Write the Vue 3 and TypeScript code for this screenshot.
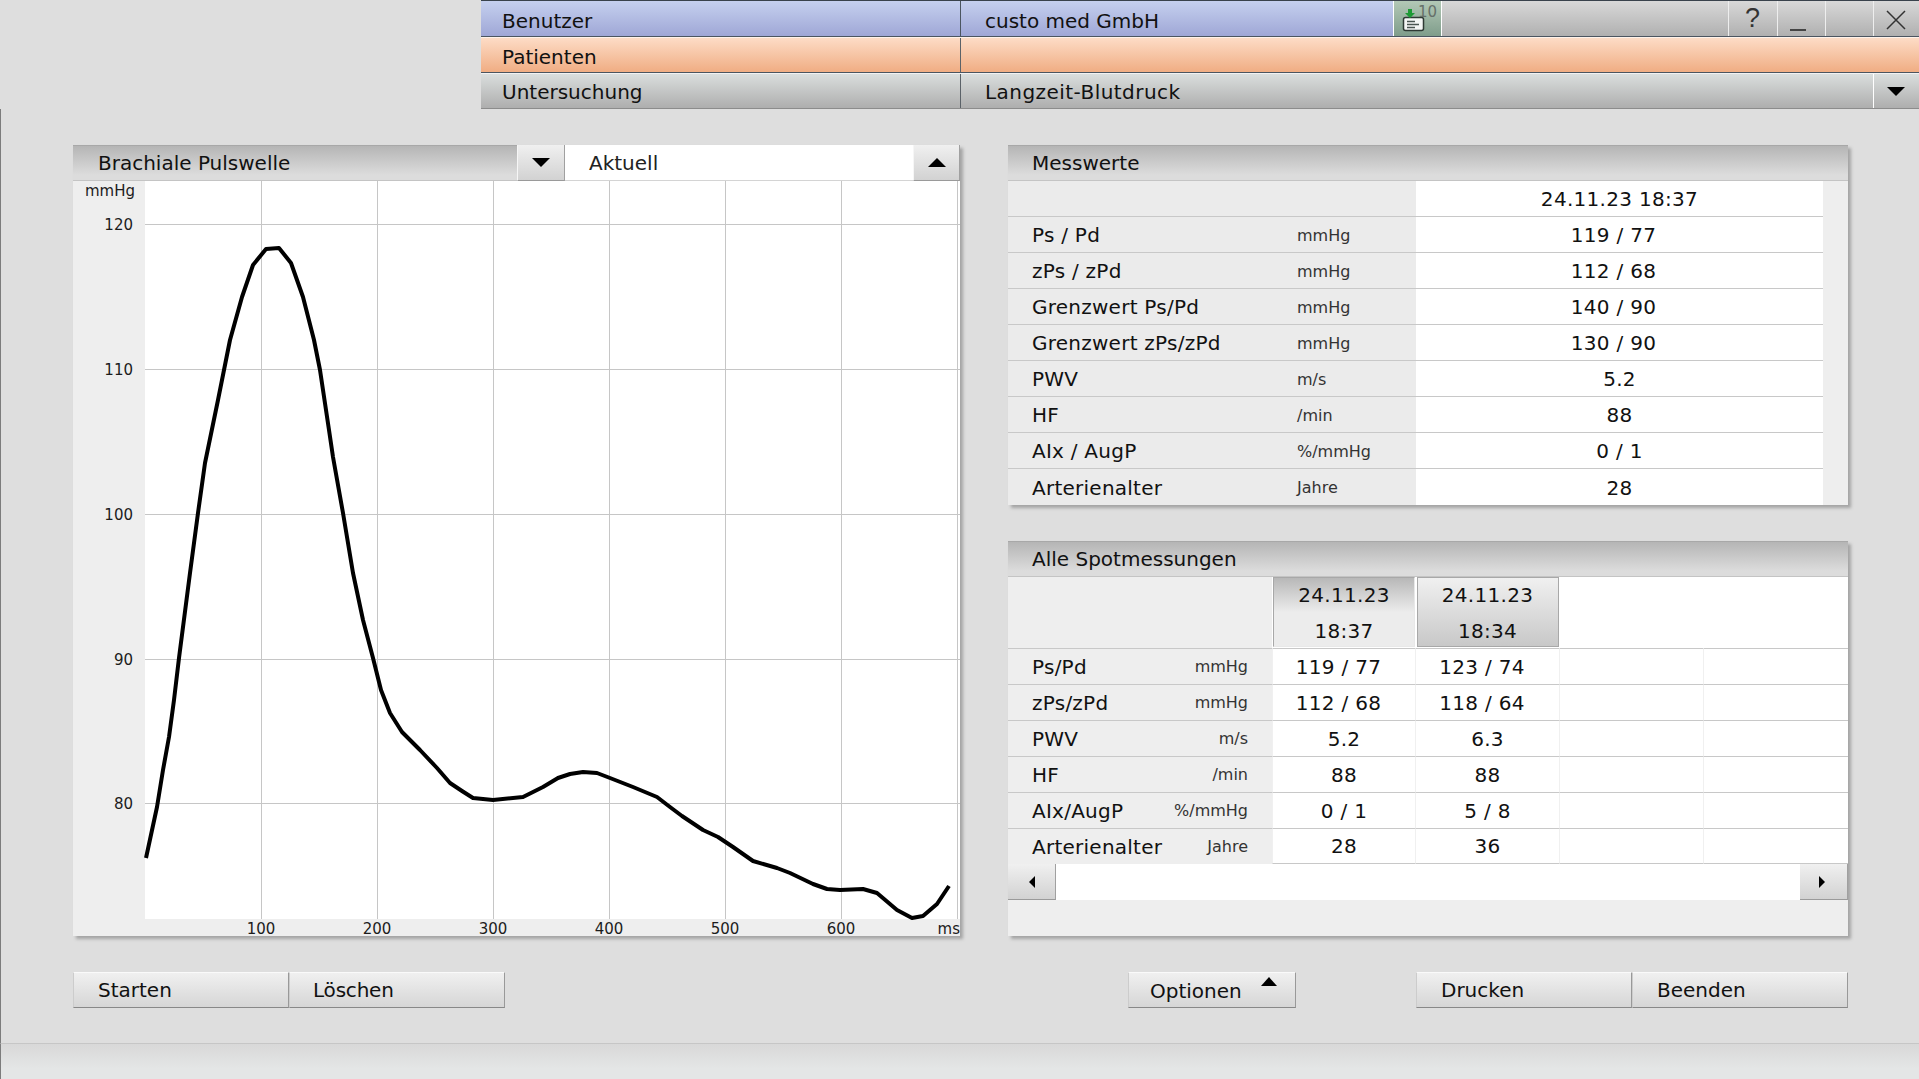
<script setup lang="ts">
const curve: [number, number][] = [
  [146, 858], [157, 807], [163, 770], [169, 737], [174, 700], [179, 658], [190, 573], [198, 513], [205, 463],
  [218, 400], [230, 340], [242, 297], [253, 265], [266, 249], [279, 248], [291, 263], [303, 297],
  [314, 340], [320, 370], [329, 430], [333, 457], [343, 513], [353, 573], [363, 620], [373, 658], [381, 690],
  [390, 713], [402, 732], [420, 750], [437, 768], [450, 783], [462, 791], [473, 798], [493, 800], [523, 797], [543, 787],
  [558, 778], [570, 774], [583, 772], [597, 773], [610, 778], [633, 787], [657, 797], [670, 807], [682, 816],
  [703, 830], [718, 837], [733, 847], [753, 861], [777, 868], [790, 873], [813, 884], [827, 889], [840, 890],
  [863, 889], [877, 893], [897, 910], [912, 918], [923, 916], [937, 904], [949, 886],
];
const curvePoints = curve.map((p) => p.join(',')).join(' ');

const xTicks = [
  { x: 261, label: '100' },
  { x: 377, label: '200' },
  { x: 493, label: '300' },
  { x: 609, label: '400' },
  { x: 725, label: '500' },
  { x: 841, label: '600' },
];
const yTicks = [
  { y: 224, label: '120' },
  { y: 369, label: '110' },
  { y: 514, label: '100' },
  { y: 659, label: '90' },
  { y: 803, label: '80' },
];

const messwerte = [
  { label: 'Ps / Pd', unit: 'mmHg', value: '119 / 77' },
  { label: 'zPs / zPd', unit: 'mmHg', value: '112 / 68' },
  { label: 'Grenzwert Ps/Pd', unit: 'mmHg', value: '140 / 90' },
  { label: 'Grenzwert zPs/zPd', unit: 'mmHg', value: '130 / 90' },
  { label: 'PWV', unit: 'm/s', value: '5.2' },
  { label: 'HF', unit: '/min', value: '88' },
  { label: 'AIx / AugP', unit: '%/mmHg', value: '0 / 1' },
  { label: 'Arterienalter', unit: 'Jahre', value: '28' },
];

const spots = [
  { label: 'Ps/Pd', unit: 'mmHg', a: '119 / 77', b: '123 / 74' },
  { label: 'zPs/zPd', unit: 'mmHg', a: '112 / 68', b: '118 / 64' },
  { label: 'PWV', unit: 'm/s', a: '5.2', b: '6.3' },
  { label: 'HF', unit: '/min', a: '88', b: '88' },
  { label: 'AIx/AugP', unit: '%/mmHg', a: '0 / 1', b: '5 / 8' },
  { label: 'Arterienalter', unit: 'Jahre', a: '28', b: '36' },
];

// the long pairs sit a few px left of the column centre in the original
const isPair = (v: string) => v.length >= 8;
</script>

<template>
  <div class="app">
    <header class="topbar">
      <div class="toprow blue">
        <div class="cell name">Benutzer</div>
        <div class="cell val">custo med GmbH</div>
        <div class="cell notify">
          <svg width="24" height="24" viewBox="0 0 24 24">
            <rect x="2.5" y="9.5" width="20" height="13" rx="2" fill="#f4f6f4" stroke="#2f3a34" stroke-width="1.5" />
            <path d="M6 13.5h8M6 16.5h12M6 19.5h8" stroke="#4a5550" stroke-width="1.5" />
            <path d="M7 1h4v4h3l-5 5-5-5h3z" fill="#1d9a35" />
          </svg>
          <span class="count">10</span>
        </div>
        <div class="cell filler"></div>
        <div class="cell win help">?</div>
        <div class="cell win">
          <span class="minimize"></span>
        </div>
        <div class="cell win"></div>
        <div class="cell win close">
          <svg width="20" height="20" viewBox="0 0 20 20">
            <path d="M1 1l18 18M19 1L1 19" stroke="#333" stroke-width="1.5" fill="none" />
          </svg>
        </div>
      </div>
      <div class="toprow orange">
        <div class="cell name">Patienten</div>
        <div class="cell grow"></div>
      </div>
      <div class="toprow gray">
        <div class="cell name">Untersuchung</div>
        <div class="cell grow val exam">Langzeit-Blutdruck</div>
        <div class="cell drop"><i class="tri down"></i></div>
      </div>
    </header>

    <main class="content">
      <div class="panels">
        <section class="panel chart-panel">
          <div class="chart-head">
            <div class="chart-title">Brachiale Pulswelle</div>
            <button class="arrow-btn"><i class="tri down"></i></button>
            <div class="chart-select">Aktuell</div>
            <button class="arrow-btn up-btn"><i class="tri up"></i></button>
          </div>
          <svg class="chart" width="887" height="755" viewBox="73 181 887 755">
            <rect x="145" y="181" width="815" height="738" fill="#fff" />
            <line v-for="t in xTicks" :key="t.label" :x1="t.x + 0.5" :x2="t.x + 0.5" y1="181" y2="919" class="grid" />
            <line x1="957.5" x2="957.5" y1="181" y2="919" class="grid" />
            <line v-for="t in yTicks" :key="t.label" x1="145" x2="960" :y1="t.y + 0.5" :y2="t.y + 0.5" class="grid" />
            <polyline :points="curvePoints" class="curve" />
            <text x="135" y="196" text-anchor="end" class="axis">mmHg</text>
            <text v-for="t in yTicks" :key="t.label" x="133" :y="t.y + 6" text-anchor="end" class="axis">{{ t.label }}</text>
            <text v-for="t in xTicks" :key="t.label" :x="t.x" y="934" text-anchor="middle" class="axis">{{ t.label }}</text>
            <text x="960" y="934" text-anchor="end" class="axis">ms</text>
          </svg>
        </section>

        <div class="side">
          <section class="panel">
            <div class="panel-head">Messwerte</div>
            <div class="m-row">
              <div class="m-label"></div>
              <div class="m-unit"></div>
              <div class="m-value">24.11.23 18:37</div>
            </div>
            <div v-for="row in messwerte" :key="row.label" class="m-row">
              <div class="m-label">{{ row.label }}</div>
              <div class="m-unit">{{ row.unit }}</div>
              <div class="m-value" :class="{ pair: isPair(row.value) }">{{ row.value }}</div>
            </div>
          </section>

          <section class="panel spot-panel">
            <div class="panel-head">Alle Spotmessungen</div>
            <div class="s-row s-dates">
              <div class="s-label"></div>
              <div class="s-col"><div class="date active">24.11.23<br />18:37</div></div>
              <div class="s-col"><div class="date">24.11.23<br />18:34</div></div>
              <div class="s-col"></div>
              <div class="s-col"></div>
            </div>
            <div v-for="row in spots" :key="row.label" class="s-row">
              <div class="s-label">
                <span>{{ row.label }}</span>
                <span class="s-unit">{{ row.unit }}</span>
              </div>
              <div class="s-col" :class="{ pair: isPair(row.a) }">{{ row.a }}</div>
              <div class="s-col" :class="{ pair: isPair(row.b) }">{{ row.b }}</div>
              <div class="s-col"></div>
              <div class="s-col"></div>
            </div>
            <div class="scroller">
              <button class="scroll-btn"><i class="tri left"></i></button>
              <button class="scroll-btn"><i class="tri right"></i></button>
            </div>
          </section>
        </div>
      </div>

      <div class="actions">
        <div class="btn-group">
          <button class="btn w-216">Starten</button>
          <button class="btn w-216 delete">Löschen</button>
        </div>
        <button class="btn options">
          <span>Optionen</span>
          <i class="tri up small"></i>
        </button>
        <div class="btn-group print-group">
          <button class="btn w-216">Drucken</button>
          <button class="btn w-216">Beenden</button>
        </div>
      </div>
    </main>

    <footer class="footer"></footer>
  </div>
</template>

<style>
html,
body {
  margin: 0;
  background: #dedede;
}
</style>

<style scoped>
.app {
  width: 1919px;
  height: 1079px;
  display: flex;
  flex-direction: column;
  overflow: hidden;
  background: #dedede;
  color: #111;
  font-family: "DejaVu Sans", Verdana, sans-serif;
  font-size: 20px;
}

/* top bar */
.topbar {
  margin-left: 481px;
  height: 109px;
  flex: none;
  border-top: 1px solid #39424c;
  box-sizing: border-box;
}
.toprow {
  display: flex;
  height: 36px;
  box-sizing: border-box;
  border-bottom: 1px solid #4b5560;
}
.toprow.gray { border-bottom-color: #8c8c8c; }
.blue { background: linear-gradient(#c5d0ef, #9fa7d6); }
.orange {
  background: linear-gradient(#fddcc6, #f0ad83);
  border-top: 1px solid #fff3ea;
}
.gray {
  background: linear-gradient(#dadedd, #aeaeae);
  border-top: 1px solid #f2f2f2;
}
.cell {
  display: flex;
  align-items: center;
  box-sizing: border-box;
  border-left: 1px solid #fff;
}
.name {
  width: 480px;
  padding: 3px 0 0 21px;
  border-left: 0;
  border-right: 1px solid #4b5560;
}
.blue .name,
.blue .val { padding-top: 5px; }
.gray .name { padding-top: 1px; }
.orange .name,
.gray .name { border-right-color: #5b6268; }
.val {
  width: 432px;
  padding: 3px 0 0 24px;
  border-left: 0;
}
.gray .exam {
  padding-top: 1px;
  letter-spacing: 0.45px;
}
.grow { flex: 1; border-left: 0; }
.notify {
  position: relative;
  width: 49px;
  background: linear-gradient(#b3c8b6, #7f9d8b);
  border-right: 1px solid #fff;
  padding: 3px 0 0 7px;
}
.count {
  position: absolute;
  left: 24px;
  top: 2px;
  font-size: 15px;
  color: #66706a;
}
.filler {
  flex: 1;
  border-left: 0;
  background: linear-gradient(#d8d8d8, #b0b0b0);
}
.win {
  width: 48px;
  justify-content: center;
  background: linear-gradient(#d8d8d8, #b0b0b0);
  border-left: 1px solid #eee;
}
.help {
  width: 49px;
  padding-right: 1px;
  font-family: "Liberation Sans", Arial, sans-serif;
  font-size: 27px;
  color: #333;
}
.close {
  width: 46px;
  padding: 3px 2px 0 0;
}
.minimize {
  display: block;
  width: 16px;
  height: 2px;
  margin: 22px 8px 0 0;
  background: #444;
}
.drop {
  width: 46px;
  justify-content: center;
  border-left: 1px solid #fff;
  padding-right: 2px;
}

/* arrows */
.tri {
  display: block;
  width: 0;
  height: 0;
  border-left: 9px solid transparent;
  border-right: 9px solid transparent;
}
.tri.down { border-top: 9px solid #000; }
.tri.up { border-bottom: 9px solid #000; }
.tri.small {
  border-left-width: 8px;
  border-right-width: 8px;
}
.tri.left,
.tri.right {
  border-top: 6px solid transparent;
  border-bottom: 6px solid transparent;
  border-left-width: 0;
  border-right-width: 0;
}
.tri.left { border-right: 6px solid #000; }
.tri.right { border-left: 6px solid #000; }

/* main area */
.content {
  flex: 1;
  border-left: 1px solid #7c7c7c;
  padding: 36px 0 0 72px;
  box-sizing: border-box;
}
.panels {
  display: flex;
  gap: 48px;
  height: 791px;
}
.panel {
  background: #eee;
  box-shadow: 3px 3px 3px #a4a4a4;
}
.chart-panel { width: 887px; height: 791px; }
.side {
  width: 840px;
  display: flex;
  flex-direction: column;
  gap: 36px;
}
.panel-head {
  height: 36px;
  box-sizing: border-box;
  padding: 0 0 1px 24px;
  display: flex;
  align-items: center;
  background: linear-gradient(#b5b5b5, #dcdcdc 85%);
  border-top: 1px solid #a8a8a8;
  border-bottom: 1px solid #c4c4c4;
}

/* chart */
.chart-head {
  display: flex;
  height: 36px;
}
.chart-title {
  width: 444px;
  box-sizing: border-box;
  padding: 0 0 1px 25px;
  display: flex;
  align-items: center;
  background: linear-gradient(#b5b5b5, #dcdcdc 85%);
  border-top: 1px solid #a8a8a8;
  border-bottom: 1px solid #c4c4c4;
}
.arrow-btn {
  width: 48px;
  padding: 0;
  display: flex;
  align-items: center;
  justify-content: center;
  background: linear-gradient(#f0f0f0, #d2d2d2);
  border: 0;
  border-left: 1px solid #f6f6f6;
  border-right: 1px solid #a0a0a0;
  border-bottom: 1px solid #9a9a9a;
}
.chart-select {
  flex: 1;
  background: #fff;
  padding-left: 24px;
  display: flex;
  align-items: center;
  color: #222;
  border-bottom: 1px solid #d4d4d4;
}
.up-btn { width: 47px; }
.chart {
  display: block;
  overflow: visible;
}
.grid {
  stroke: #c6c6c6;
  stroke-width: 1;
}
.curve {
  fill: none;
  stroke: #000;
  stroke-width: 4;
  stroke-linejoin: round;
}
.axis {
  font-family: "DejaVu Sans", Verdana, sans-serif;
  font-size: 15px;
  fill: #1c1c1c;
}

/* Messwerte table */
.m-row {
  display: grid;
  grid-template-columns: 289px 119px 407px 25px;
  height: 36px;
}
.m-label,
.m-unit {
  display: flex;
  align-items: center;
  padding-top: 1px;
  background: #ebebeb;
  border-bottom: 1px solid #c8c8c8;
  box-sizing: border-box;
}
.m-label {
  padding-left: 24px;
  letter-spacing: 0.25px;
}
.m-unit { font-size: 16px; color: #333; }
.m-value {
  background: #fff;
  display: flex;
  align-items: center;
  justify-content: center;
  padding-top: 1px;
  letter-spacing: 0.3px;
  border-bottom: 1px solid #c8c8c8;
  box-sizing: border-box;
}
.m-row:last-child > div { border-bottom: 0; }
.m-value.pair { padding-right: 12px; }

/* Spot table */
.spot-panel { flex: 1; position: relative; }
.s-row {
  display: grid;
  grid-template-columns: 264px 143px 144px 144px 145px;
  height: 36px;
}
.s-dates { height: 72px; }
.s-row:nth-last-child(2) { height: 35px; }
.s-label {
  display: flex;
  justify-content: space-between;
  align-items: center;
  padding: 0 24px;
  letter-spacing: 0.25px;
  background: #eee;
  border-bottom: 1px solid #c8c8c8;
  box-sizing: border-box;
}
.s-row:nth-last-child(2) .s-label { border-bottom: 0; }
.s-unit {
  font-size: 16px;
  letter-spacing: 0;
  color: #333;
}
.s-col {
  background: #fff;
  display: flex;
  align-items: center;
  justify-content: center;
  letter-spacing: 0.3px;
  border-left: 1px solid #f0f0f0;
  border-bottom: 1px solid #c8c8c8;
  box-sizing: border-box;
}
.s-col.pair { padding-right: 11px; }
.s-dates .s-col {
  align-items: flex-start;
  border-left-color: #fff;
}
.date {
  width: 142px;
  height: 70px;
  line-height: 35.5px;
  text-align: center;
  box-sizing: border-box;
  border: 1px solid #a8a8a8;
  background: linear-gradient(#f0f0f0, #c8c8c8);
}
.date.active {
  background: linear-gradient(#b8b8b8, #ececec 50%);
  border-bottom-color: #e8e8e8;
  border-right-color: #e8e8e8;
}
.scroller {
  display: flex;
  justify-content: space-between;
  height: 36px;
  background: #fff;
}
.scroll-btn {
  width: 48px;
  padding: 0;
  display: flex;
  align-items: center;
  justify-content: center;
  background: linear-gradient(#f0f0f0, #d2d2d2);
  border: 0;
  border-right: 1px solid #a0a0a0;
  border-bottom: 1px solid #9a9a9a;
}
.scroll-btn:last-child { padding-right: 4px; }

/* bottom buttons */
.actions {
  display: flex;
  margin-top: 36px;
  height: 36px;
}
.btn-group { display: flex; }
.print-group { margin-left: 120px; }
.btn {
  height: 36px;
  box-sizing: border-box;
  padding: 0 0 0 24px;
  text-align: left;
  font: inherit;
  color: #111;
  background: linear-gradient(#f0f0f0, #d6d6d6);
  border: 0;
  border-top: 1px solid #fafafa;
  border-bottom: 1px solid #888;
  border-right: 1px solid #999;
  border-left: 1px solid #ccc;
}
.w-216 { width: 216px; }
.delete {
  padding-left: 23px;
  letter-spacing: -0.2px;
}
.options {
  position: relative;
  width: 168px;
  margin-left: 623px;
  padding: 2px 0 0 21px;
}
.options .tri {
  position: absolute;
  right: 18px;
  top: 4px;
}

.footer {
  flex: none;
  height: 36px;
  box-sizing: border-box;
  border-top: 1px solid #c6c6c6;
  border-left: 1px solid #7c7c7c;
  background: linear-gradient(#d8d8d8, #e4e6e6 70%);
}
</style>
